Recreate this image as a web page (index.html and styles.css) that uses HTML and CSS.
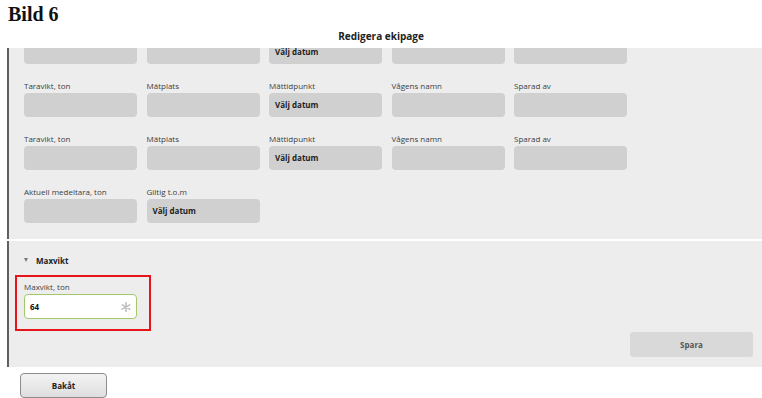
FILE: index.html
```html
<!DOCTYPE html>
<html lang="sv">
<head>
<meta charset="utf-8">
<title>Bild 6</title>
<link rel="stylesheet" href="styles.css">
</head>
<body>
<h1 class="page-title">Bild 6</h1>
<div class="dialog-title">Redigera ekipage</div>
<div class="panel">
  <section class="section section-scroll">
    <div class="rows">
      <div class="row">
        <div class="group"><span class="label">Taravikt, ton</span><div class="field"></div></div>
        <div class="group"><span class="label">Mätplats</span><div class="field"></div></div>
        <div class="group"><span class="label">Mättidpunkt</span><div class="field">Välj datum</div></div>
        <div class="group"><span class="label">Vågens namn</span><div class="field"></div></div>
        <div class="group"><span class="label">Sparad av</span><div class="field"></div></div>
      </div>
      <div class="row">
        <div class="group"><span class="label">Taravikt, ton</span><div class="field"></div></div>
        <div class="group"><span class="label">Mätplats</span><div class="field"></div></div>
        <div class="group"><span class="label">Mättidpunkt</span><div class="field">Välj datum</div></div>
        <div class="group"><span class="label">Vågens namn</span><div class="field"></div></div>
        <div class="group"><span class="label">Sparad av</span><div class="field"></div></div>
      </div>
      <div class="row">
        <div class="group"><span class="label">Taravikt, ton</span><div class="field"></div></div>
        <div class="group"><span class="label">Mätplats</span><div class="field"></div></div>
        <div class="group"><span class="label">Mättidpunkt</span><div class="field">Välj datum</div></div>
        <div class="group"><span class="label">Vågens namn</span><div class="field"></div></div>
        <div class="group"><span class="label">Sparad av</span><div class="field"></div></div>
      </div>
      <div class="row">
        <div class="group"><span class="label">Aktuell medeltara, ton</span><div class="field"></div></div>
        <div class="group"><span class="label">Giltig t.o.m</span><div class="field">Välj datum</div></div>
      </div>
    </div>
  </section>
  <section class="section section-max">
    <div class="section-head"><span class="caret"></span><span class="section-name">Maxvikt</span></div>
    <div class="highlight">
      <div class="group">
        <span class="label">Maxvikt, ton</span>
        <div class="input">
          <span class="input-value">64</span>
          <svg class="required" width="10" height="10" viewBox="0 0 10 10" aria-hidden="true">
            <path d="M5 0.6V9.4M1.2 2.8L8.8 7.2M1.2 7.2L8.8 2.8" stroke="#bdbdbd" stroke-width="1.5" stroke-linecap="round" fill="none"/>
          </svg>
        </div>
      </div>
    </div>
    <div class="actions">
      <button class="btn-save" type="button">Spara</button>
    </div>
  </section>
</div>
<button class="btn-back" type="button">Bakåt</button>
</body>
</html>
```

FILE: styles.css
```css
* { box-sizing: border-box; }

body {
  margin: 0;
  background: #ffffff;
  font-family: "Open Sans", "Noto Sans", sans-serif;
  color: #222;
}

.page-title {
  margin: 0;
  padding: 3px 8px 0;
  font-family: "Liberation Serif", serif;
  font-size: 20px;
  line-height: 22px;
  font-weight: bold;
  color: #111;
}

.dialog-title {
  height: 23px;
  line-height: 23px;
  text-align: center;
  font-size: 10px;
  font-weight: bold;
  color: #222;
}

.panel {
  margin-left: 7px;
  display: flex;
  flex-direction: column;
  gap: 2px;
}

.section {
  background: #ededed;
  border-left: 2px solid #5f5f5f;
}

.section-scroll {
  height: 191px;
  overflow: hidden;
  padding-left: 15px;
}

.rows {
  margin-top: -21px;
  display: flex;
  flex-direction: column;
  gap: 16px;
}

.row {
  display: grid;
  grid-template-columns: repeat(5, 113px);
  column-gap: 9.5px;
}

.group {
  display: flex;
  flex-direction: column;
  width: 113px;
}

.label {
  display: block;
  font-size: 8px;
  line-height: 12px;
  color: #3d3d3d;
  margin-bottom: 1px;
  white-space: nowrap;
}

.field {
  height: 24px;
  background: #d0d0d0;
  border-radius: 4px;
  padding-left: 6px;
  font-size: 8px;
  font-weight: bold;
  line-height: 24px;
  color: #1e1e1e;
}

.section-max {
  height: 126px;
  padding: 13px 9px 10px 6px;
  display: flex;
  flex-direction: column;
}

.section-head {
  display: flex;
  align-items: center;
  height: 12px;
  padding-left: 9px;
  gap: 8px;
}

.caret {
  width: 0;
  height: 0;
  border-left: 2.5px solid transparent;
  border-right: 2.5px solid transparent;
  border-top: 4px solid #777;
}

.section-name {
  font-size: 8px;
  font-weight: bold;
  color: #222;
}

.highlight {
  margin-top: 9px;
  align-self: flex-start;
  border: 2px solid #e8141b;
  padding: 4px 12px 10px 7px;
}

.input {
  height: 25px;
  background: #ffffff;
  border: 1px solid #a3c86b;
  border-radius: 4px;
  display: flex;
  align-items: center;
  justify-content: space-between;
  padding: 0 5px 0 5px;
}

.input-value {
  font-size: 8px;
  font-weight: bold;
  color: #111;
}

.required {
  display: block;
}

.actions {
  margin-top: 1px;
  display: flex;
  justify-content: flex-end;
}

.btn-save {
  width: 123px;
  height: 25px;
  border: none;
  border-radius: 3px;
  background: #d9d9d9;
  font-family: "Open Sans", "Noto Sans", sans-serif;
  font-size: 8px;
  font-weight: bold;
  color: #555;
  padding: 0;
}

.btn-back {
  display: block;
  margin: 6px 0 0 20px;
  width: 87px;
  height: 25px;
  border: 1px solid #8c8c8c;
  border-radius: 4px;
  background: linear-gradient(#f3f3f3, #dedede);
  font-family: "Open Sans", "Noto Sans", sans-serif;
  font-size: 8px;
  font-weight: bold;
  color: #222;
  padding: 0;
}
```
